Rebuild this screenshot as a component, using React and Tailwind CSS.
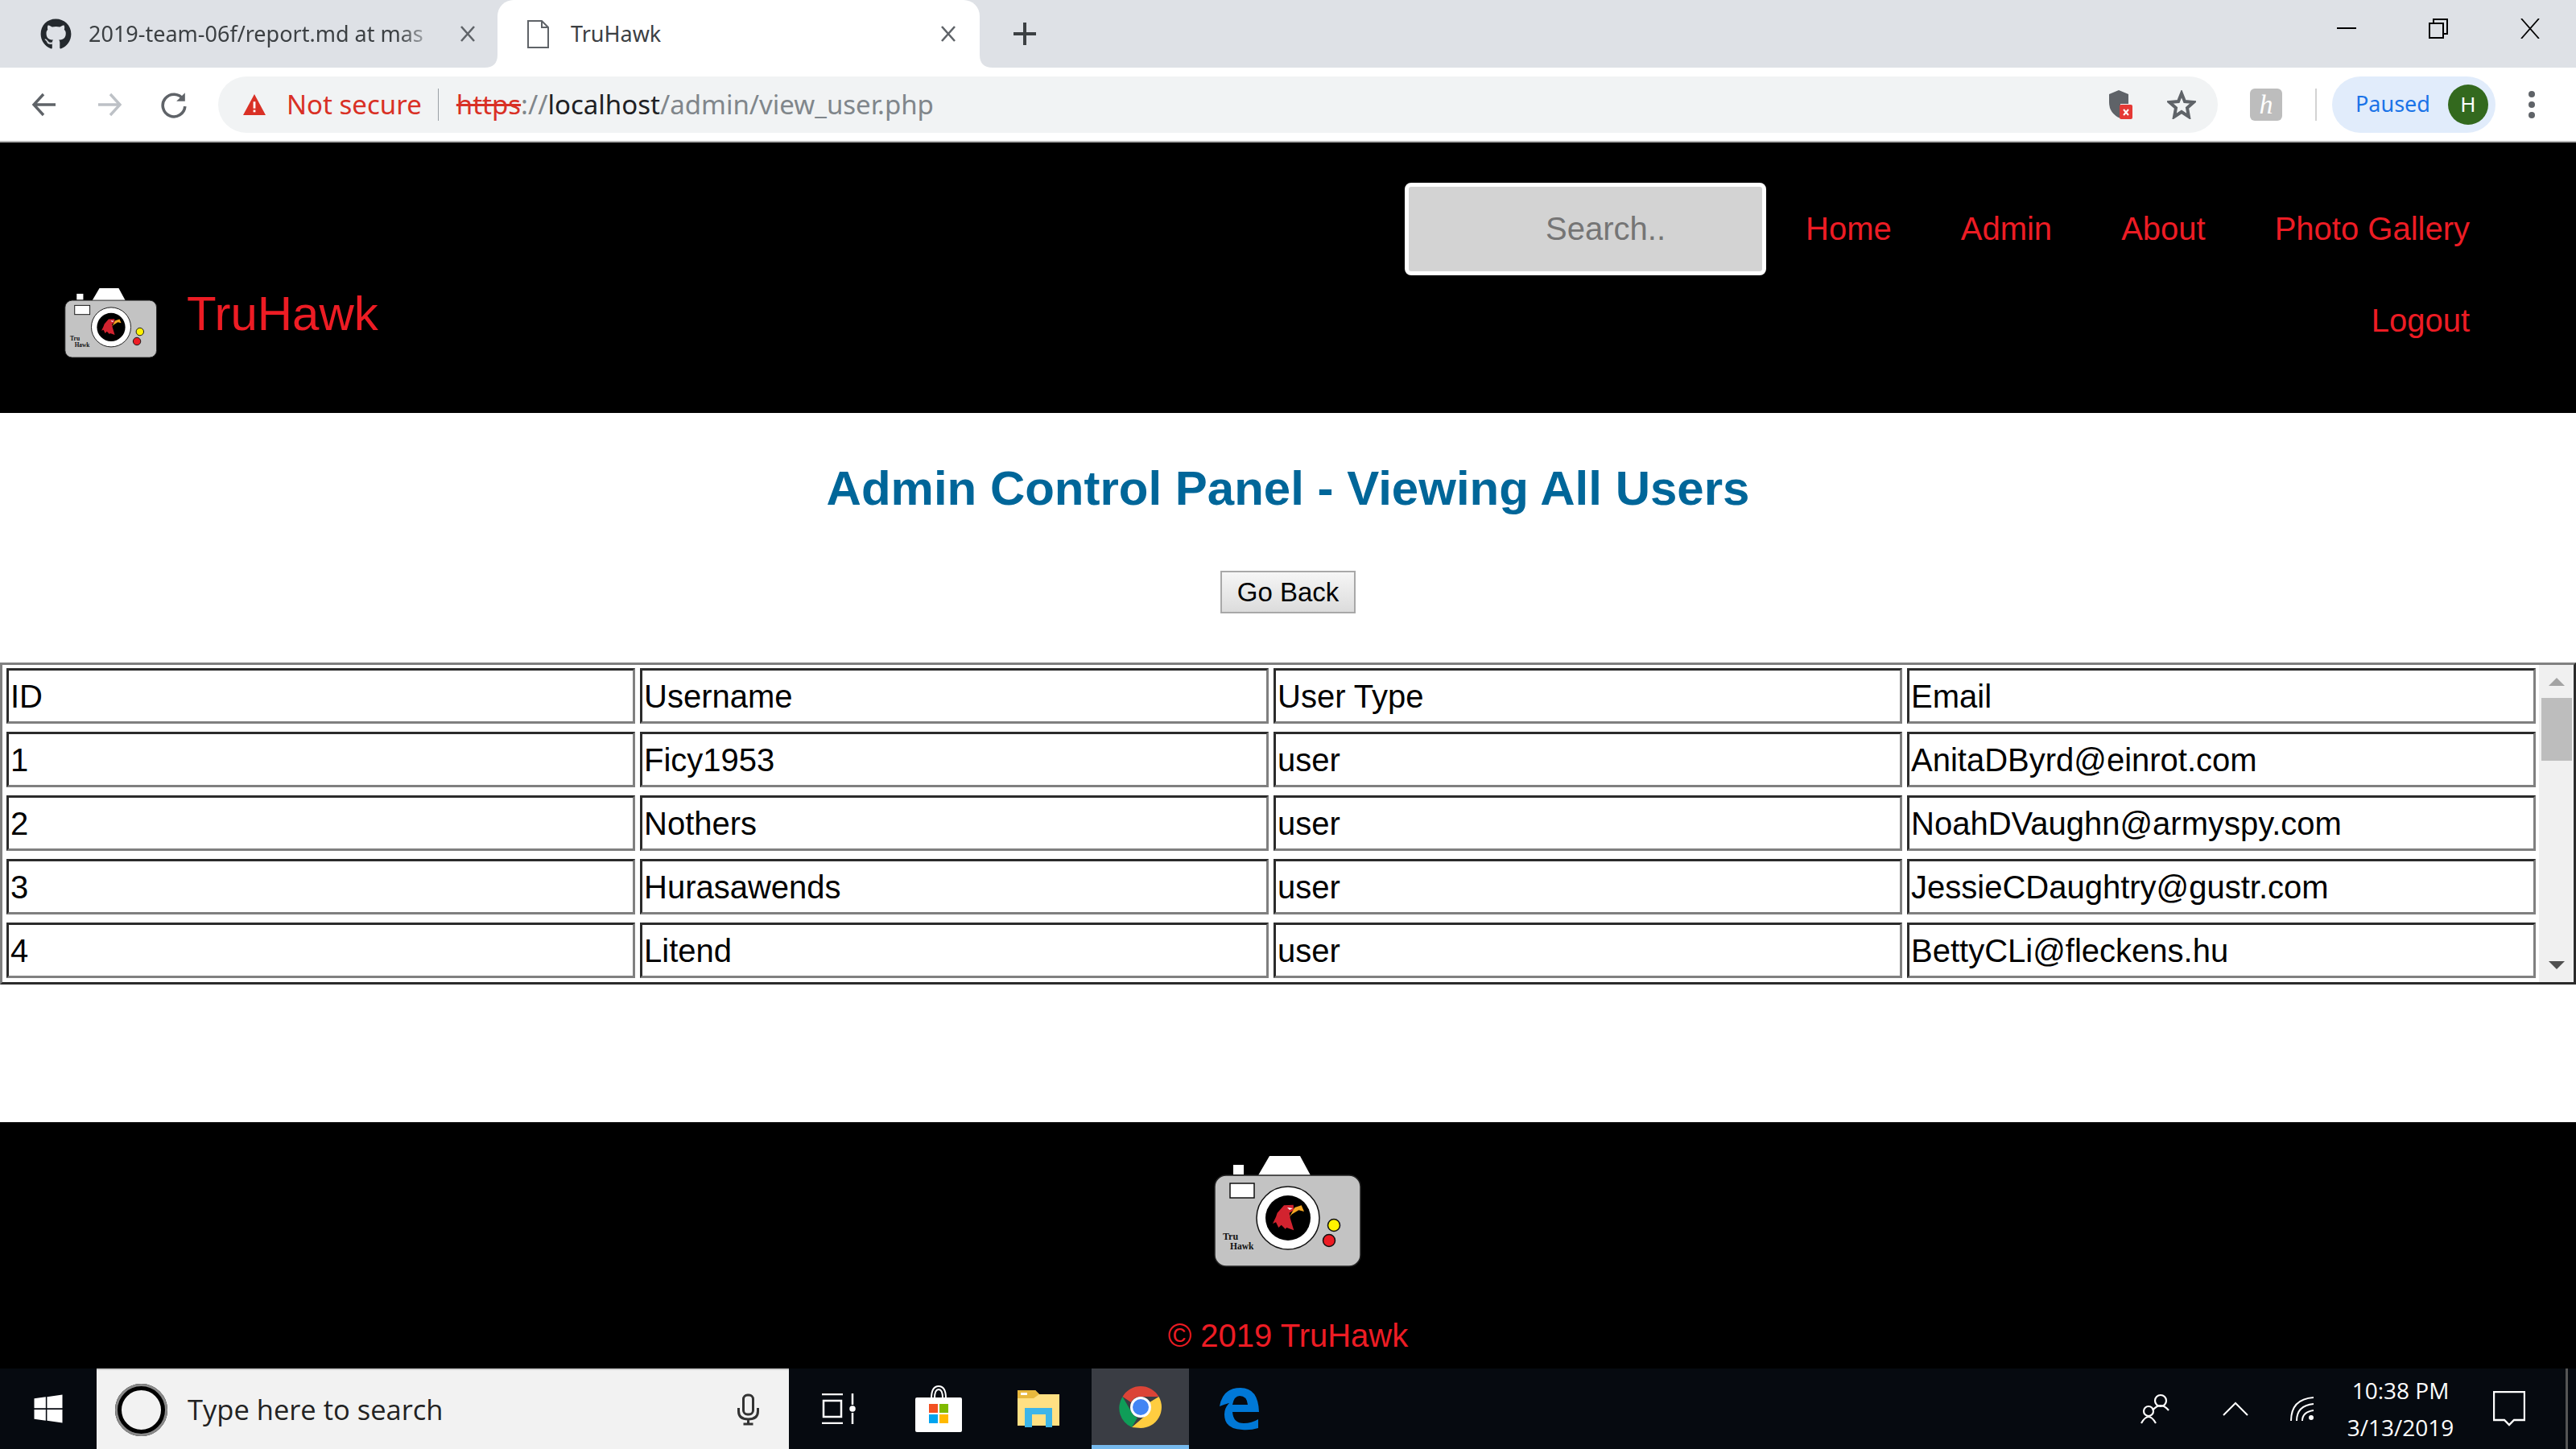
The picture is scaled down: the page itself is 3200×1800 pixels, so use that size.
import React from "react";
import { FaGithub, FaWindows } from "react-icons/fa";

const users = [
  ["ID", "Username", "User Type", "Email"],
  ["1", "Ficy1953", "user", "AnitaDByrd@einrot.com"],
  ["2", "Nothers", "user", "NoahDVaughn@armyspy.com"],
  ["3", "Hurasawends", "user", "JessieCDaughtry@gustr.com"],
  ["4", "Litend", "user", "BettyCLi@fleckens.hu"],
];

// logo camera, drawn on the footer image's own box
const CameraLogo = ({ className }) => (
  <svg viewBox="0 0 184 140" className={className}>
    <path d="M55 24 L69 0 H107 L120 24 Z" fill="#fff" />
    <rect x="24" y="11" width="13" height="12" fill="#fff" />
    <rect x="1" y="24" width="181" height="113" rx="14" fill="#c3c3c3" stroke="#222" strokeWidth="1.5" />
    <rect x="20" y="34" width="30" height="18" fill="#fff" stroke="#111" strokeWidth="1.5" />
    <circle cx="92" cy="77" r="39" fill="#fff" stroke="#111" strokeWidth="1.5" />
    <circle cx="92" cy="77" r="28" fill="#000" />
    <path d="M78.7 70.7 L87 61.3 L98.7 60.7 L99.3 67.3 L93.7 70.7 L94.7 77.3 L99.3 92.3 L90.3 89 L88.7 90.7 L83.7 85.7 L80.3 89 L77 82.3 L73 84 L77 75.7 Z" fill="#d2232f" />
    <path d="M93.7 75.7 L100.3 64 L108.7 61.3 L112 69 L105.3 67.3 L97 72.3 Z" fill="#f5a623" />
    <path d="M91 64 L98 65 L94 67 Z" fill="#fff" />
    <circle cx="149" cy="86" r="7.5" fill="#fff200" stroke="#111" strokeWidth="1.5" />
    <circle cx="143" cy="105" r="7.5" fill="#ed1c24" stroke="#111" strokeWidth="1.5" />
    <text x="11" y="104" fontSize="12" fontWeight="700" fontFamily="Liberation Serif, serif" fill="#111">Tru</text>
    <text x="20" y="116" fontSize="11.5" fontWeight="700" fontFamily="Liberation Serif, serif" fill="#111">Hawk</text>
  </svg>
);

const TabClose = () => (
  <svg viewBox="0 0 18 20" className="w-[18px] h-[20px] shrink-0" stroke="#5f6368" strokeWidth="2.6">
    <path d="M1 1 L17 19 M17 1 L1 19" />
  </svg>
);

const Chrome = () => (
  <div className="h-[177px] shrink-0 flex flex-col font-['Noto_Sans',sans-serif]">
    {/* tab strip */}
    <div className="h-[84px] bg-[#dee1e6] flex items-start">
      <div className="w-[618px] h-[84px] flex items-center pl-[50px]">
        <FaGithub className="w-[39px] h-[39px] text-[#24292e] shrink-0" />
        <span className="ml-[21px] w-[437px] text-[27px] text-[#3c4043] whitespace-nowrap [mask-image:linear-gradient(to_right,black_88%,transparent)]">2019-team-06f/report.md at mas</span>
        <span className="ml-[25px]"><TabClose /></span>
      </div>
      <div className="relative w-[599px] h-[84px] bg-white rounded-t-[20px] flex items-center pl-[37px] pr-[30px]">
        <svg viewBox="0 0 16 16" className="absolute bottom-0 -left-[16px] w-[16px] h-[16px]">
          <path d="M16 0 V16 H0 Q16 16 16 0 Z" fill="#fff" />
        </svg>
        <svg viewBox="0 0 16 16" className="absolute bottom-0 -right-[16px] w-[16px] h-[16px]">
          <path d="M0 0 V16 H16 Q0 16 0 0 Z" fill="#fff" />
        </svg>
        <svg viewBox="0 0 27 35" className="w-[27px] h-[35px]" fill="none" stroke="#5f6368" strokeWidth="2">
          <path d="M1 1 H18 L26 9 V34 H1 Z M18 1 V9 H26" />
        </svg>
        <span className="ml-[27px] text-[27px] text-[#3c4043] flex-1">TruHawk</span>
        <TabClose />
      </div>
      <div className="h-[84px] w-[112px] flex items-center justify-center">
        <svg viewBox="0 0 28 28" className="w-[28px] h-[28px]" stroke="#3c4043" strokeWidth="4">
          <path d="M14 0 V28 M0 14 H28" />
        </svg>
      </div>
      <div className="flex-1" />
      <div className="flex h-[70px] items-center pr-[45px] gap-[90px]">
        <svg viewBox="0 0 24 3" className="w-[24px] h-[3px]"><rect width="24" height="2" fill="#000" /></svg>
        <svg viewBox="0 0 24 25" className="w-[24px] h-[25px]" fill="none" stroke="#000" strokeWidth="2">
          <path d="M1 6 H18 V24 H1 Z M6 6 V1 H23 V19 H18" />
        </svg>
        <svg viewBox="0 0 24 25" className="w-[24px] h-[25px]" stroke="#000" strokeWidth="1.8">
          <path d="M1 0 L23 25 M23 0 L1 25" />
        </svg>
      </div>
    </div>
    {/* toolbar */}
    <div className="h-[93px] bg-white border-b-[2px] border-[#b5b5b5] flex items-center">
      <div className="w-[271px] flex items-center pl-[39px] shrink-0">
        <svg viewBox="0 0 32 32" className="w-[32px] h-[32px]" fill="none" stroke="#5f6368" strokeWidth="3.4">
          <path d="M30 16 H4 M15 3 L3 16 L15 29" />
        </svg>
        <svg viewBox="0 0 32 32" className="w-[32px] h-[32px] ml-[49px]" fill="none" stroke="#bdc1c6" strokeWidth="3.4">
          <path d="M2 16 H28 M17 3 L29 16 L17 29" />
        </svg>
        <svg viewBox="0 0 32 32" className="w-[34px] h-[34px] ml-[47px]" fill="none" stroke="#5f6368" strokeWidth="3.4">
          <path d="M27 10 A13 13 0 1 0 29 18" />
          <path d="M29 2 V12 H19 Z" fill="#5f6368" stroke="none" />
        </svg>
      </div>
      <div className="w-[2484px] h-[70px] bg-[#f1f3f4] rounded-full flex items-center pl-[29px] pr-[27px] shrink-0">
        <svg viewBox="0 0 32 30" className="w-[32px] h-[28px] shrink-0">
          <path d="M16 1 L31 29 H1 Z" fill="#d93025" />
          <rect x="14.5" y="11" width="3" height="9" fill="#fff" />
          <rect x="14.5" y="22" width="3" height="3" fill="#fff" />
        </svg>
        <span className="ml-[24px] text-[33px] text-[#d93025]">Not secure</span>
        <span className="ml-[20px] w-[1px] h-[40px] bg-[#9aa0a6]" />
        <span className="ml-[22px] text-[33px] text-[#80868b] whitespace-nowrap">
          <span className="text-[#d93025] line-through">https</span>://<span className="text-[#202124]">localhost</span>/admin/view_user.php
        </span>
        <div className="flex-1" />
        <svg viewBox="0 0 32 38" className="w-[32px] h-[38px]">
          <path d="M14 1 L26 6 V18 H16 V36 Q2 30 2 16 V6 Z" fill="#5f6368" />
          <path d="M14 4 L24 8 V18" fill="none" stroke="#5f6368" strokeWidth="2" />
          <rect x="15" y="19" width="16" height="18" rx="2" fill="#e53935" />
          <path d="M20 25 L26 32 M26 25 L20 32" stroke="#fff" strokeWidth="2" />
        </svg>
        <svg viewBox="0 0 36 36" className="w-[36px] h-[36px] ml-[42px]" fill="none" stroke="#5f6368" strokeWidth="4">
          <path d="M18 4 L22 14 L33 15 L25 22 L27 33 L18 27 L9 33 L11 22 L3 15 L14 14 Z" />
        </svg>
      </div>
      <div className="ml-[40px] w-[40px] h-[40px] rounded-[6px] bg-[#bdbdbd] flex items-center justify-center text-white text-[34px] leading-none italic font-['Liberation_Serif',serif] shrink-0">h</div>
      <div className="ml-[41px] w-[2px] h-[40px] bg-[#d3d3d3] shrink-0" />
      <div className="ml-[19px] w-[203px] h-[70px] rounded-full bg-[#e1ecfb] flex items-center pl-[29px] shrink-0">
        <span className="text-[27px] text-[#1a73e8]">Paused</span>
        <span className="ml-[22px] w-[50px] h-[50px] rounded-full bg-[#33691e] text-white text-[26px] flex items-center justify-center">H</span>
      </div>
      <div className="ml-[41px] flex flex-col gap-[5px]">
        <span className="w-[8px] h-[8px] rounded-full bg-[#5f6368]" />
        <span className="w-[8px] h-[8px] rounded-full bg-[#5f6368]" />
        <span className="w-[8px] h-[8px] rounded-full bg-[#5f6368]" />
      </div>
    </div>
  </div>
);

const navLink = "text-[40px] text-[#ed1c24] px-[43px] leading-[50px]";

const Taskbar = () => (
  <div className="h-[100px] shrink-0 bg-[#060a10] flex items-stretch font-['Open_Sans',sans-serif]">
    <div className="w-[120px] flex items-center justify-center">
      <FaWindows className="w-[40px] h-[40px] text-white" />
    </div>
    <div className="w-[860px] bg-[#f2f2f2] border-t-[2px] border-[#cfcfcf] flex items-center pl-[23px] pr-[36px]">
      <span className="w-[65px] h-[65px] rounded-full border-[8px] border-black outline outline-[3px] outline-[#8a8a8a] outline-offset-[-3px]" />
      <span className="ml-[25px] text-[34.5px] text-[#222] flex-1">Type here to search</span>
      <svg viewBox="0 0 28 40" className="w-[29px] h-[40px]" fill="none" stroke="#333" strokeWidth="3">
        <rect x="8" y="2" width="12" height="24" rx="5" />
        <path d="M2 18 V22 Q2 32 14 32 Q26 32 26 22 V18 M14 32 V38 M8 38 H20" />
      </svg>
    </div>
    <div className="w-[124px] flex items-center justify-center">
      <svg viewBox="0 0 42 38" className="w-[42px] h-[38px]" fill="none" stroke="#fff" strokeWidth="2.5">
        <path d="M0 1 H26 M0 37 H26 M2 9 H24 V29 H2 Z M38 0 V14 M38 24 V38" />
        <circle cx="38" cy="19" r="2.5" fill="#fff" />
      </svg>
    </div>
    <div className="w-[124px] flex items-center justify-center">
      <svg viewBox="0 0 58 58" className="w-[58px] h-[58px]">
        <path d="M20 16 Q20 1 29 1 Q38 1 38 16 M24 16 Q24 5 29 5 Q34 5 34 16" fill="none" stroke="#fff" strokeWidth="2" />
        <rect y="15" width="58" height="43" rx="2" fill="#fff" />
        <rect x="17" y="23" width="11" height="11" fill="#f25022" />
        <rect x="30" y="23" width="11" height="11" fill="#7fba00" />
        <rect x="17" y="36" width="11" height="11" fill="#00a4ef" />
        <rect x="30" y="36" width="11" height="11" fill="#ffb900" />
      </svg>
    </div>
    <div className="w-[124px] flex items-center justify-center">
      <svg viewBox="0 0 52 46" className="w-[52px] h-[46px]">
        <path d="M0 0 H22 L27 5 H52 V44 H0 Z" fill="#ffe083" />
        <path d="M0 0 H22 L27 5 L20 10 H0 Z" fill="#e8b93e" />
        <rect x="4" y="3" width="8" height="3" fill="#fff" />
        <path d="M9 46 V22 H43 V46 H35 V30 H18 V46 Z" fill="#3db5e8" />
      </svg>
    </div>
    <div className="ml-[4px] w-[121px] bg-[#3a3d44] border-b-[5px] border-[#76b9ed] flex items-center justify-center">
      <svg viewBox="0 0 56 56" className="w-[56px] h-[56px]">
        <path d="M28 2 A26 26 0 0 1 50.5 15 H28 A13 13 0 0 0 16 22 L5.5 15 A26 26 0 0 1 28 2 Z" fill="#db4437" />
        <path d="M5.5 15 L16.5 34 A13 13 0 0 0 24 41 L17 53 A26 26 0 0 1 5.5 15 Z" fill="#0f9d58" />
        <path d="M50.5 15 A26 26 0 0 1 28 54 L17 53 L39 34 A13 13 0 0 0 39 22 Z" fill="#ffcd40" />
        <circle cx="28" cy="28" r="13" fill="#fff" />
        <circle cx="28" cy="28" r="10" fill="#4285f4" />
      </svg>
    </div>
    <div className="w-[124px] flex items-center justify-center">
      <svg viewBox="0 0 52 54" className="w-[52px] h-[54px]" fill="#0078d7">
        <path d="M2 24 Q6 1 28 1 Q50 1 51 31 H18 Q19 45 32 45 Q42 45 50 40 V51 Q40 54 30 53 Q8 52 8 34 Q8 26 14 20 Q9 21 2 24 Z M18 22 H37 Q36 11 27 11 Q20 11 18 22 Z" fillRule="evenodd" />
      </svg>
    </div>
    <div className="flex-1" />
    <div className="flex items-center pr-[10px]">
      <svg viewBox="0 0 36 38" className="w-[36px] h-[38px]" fill="none" stroke="#fff" strokeWidth="2.2">
        <circle cx="25" cy="9" r="7" />
        <path d="M15 21 Q25 9 35 21" />
        <circle cx="10" cy="22" r="6" />
        <path d="M1 37 Q10 21 19 37" />
      </svg>
      <svg viewBox="0 0 32 18" className="w-[32px] h-[18px] ml-[66px]" fill="none" stroke="#fff" strokeWidth="2">
        <path d="M1 17 L16 2 L31 17" />
      </svg>
      <svg viewBox="0 0 30 30" className="w-[30px] h-[30px] ml-[52px]" fill="none" stroke="#fff" strokeWidth="2">
        <path d="M1 30 Q1 3 29 1 M8 30 Q8 11 29 9 M15 30 Q15 19 29 17" />
        <circle cx="26" cy="26" r="3" fill="#fff" stroke="none" />
      </svg>
      <div className="ml-[39px] w-[136px] flex flex-col items-center text-white text-[28px] leading-[46px] whitespace-nowrap">
        <span>10:38 PM</span>
        <span>3/13/2019</span>
      </div>
      <svg viewBox="0 0 40 44" className="w-[40px] h-[44px] ml-[47px]" fill="none" stroke="#fff" strokeWidth="2.4">
        <path d="M1 1 H39 V36 H26 L20 42 L14 36 H1 Z" />
      </svg>
      <div className="ml-[50px] w-[3px] h-[100px] bg-[#555]" />
    </div>
  </div>
);

export default function App() {
  return (
    <div className="h-[1800px] w-[3200px] flex flex-col overflow-hidden bg-white font-['Liberation_Sans',sans-serif]">
      <Chrome />

      {/* site header */}
      <header className="h-[336px] shrink-0 bg-black flex justify-between pl-[80px]">
        <div className="flex items-end pb-[67px]">
          <CameraLogo className="w-[116px] h-[88px]" />
          <span className="ml-[36px] mb-[21px] text-[60px] leading-[70px] text-[#ed1c24]">TruHawk</span>
        </div>
        <nav className="w-[1480px] flex flex-wrap justify-end content-start pt-[50px] pr-[132px]">
          <div className="w-[449px] h-[115px] bg-[#d3d3d3] border-[5px] border-white rounded-[8px] flex items-center pl-[170px] pb-[2px] text-[40px] text-[#757575]">Search..</div>
          <div className="flex items-center h-[115px] ml-[6px] pb-[2px]">
            <a className={navLink}>Home</a>
            <a className={navLink}>Admin</a>
            <a className={navLink}>About</a>
            <a className={`${navLink} pr-0`}>Photo Gallery</a>
          </div>
          <div className="w-full flex justify-end">
            <a className={`${navLink} pr-0 h-[112px] flex items-center`}>Logout</a>
          </div>
        </nav>
      </header>

      {/* admin panel */}
      <main className="flex-1 flex flex-col items-center">
        <h1 className="mt-[57px] text-[60px] leading-[74px] font-bold text-[#006699]">Admin Control Panel - Viewing All Users</h1>
        <button className="mt-[65px] w-[168px] h-[53px] bg-gradient-to-b from-[#f6f6f6] to-[#dcdcdc] border-[2px] border-[#a8a8a8] text-[33px] text-black">Go Back</button>
        <div className="mt-[61px] w-full h-[400px] flex border-[3px] border-t-[#808080] border-l-[#808080] border-r-[#2b2b2b] border-b-[#2b2b2b]">
          <div className="flex-1 grid grid-cols-4 content-start gap-x-[6px] gap-y-[10px] pl-[5px] pr-[4px] pt-[4px]">
            {users.flat().map((cell, i) => (
              <div
                key={i}
                className="h-[69px] border-[3px] border-t-[#2b2b2b] border-l-[#2b2b2b] border-r-[#808080] border-b-[#808080] pl-[2px] text-[40px] leading-[64px] text-black whitespace-nowrap"
              >
                {cell}
              </div>
            ))}
          </div>
          <div className="w-[43px] bg-[#f0f0f0] flex flex-col items-center justify-between py-[16px] relative">
            <svg viewBox="0 0 20 10" className="w-[20px] h-[10px]"><path d="M10 0 L20 10 H0 Z" fill="#a3a3a3" /></svg>
            <div className="absolute top-[41px] left-[3px] w-[38px] h-[78px] bg-[#bdbdbd]" />
            <svg viewBox="0 0 20 10" className="w-[20px] h-[10px]"><path d="M10 10 L20 0 H0 Z" fill="#505050" /></svg>
          </div>
        </div>
      </main>

      {/* footer */}
      <footer className="h-[306px] shrink-0 bg-black flex flex-col items-center pt-[42px]">
        <CameraLogo className="w-[184px] h-[140px]" />
        <span className="mt-[58px] text-[40px] leading-[50px] text-[#ed1c24]">© 2019 TruHawk</span>
      </footer>

      <Taskbar />
    </div>
  );
}
